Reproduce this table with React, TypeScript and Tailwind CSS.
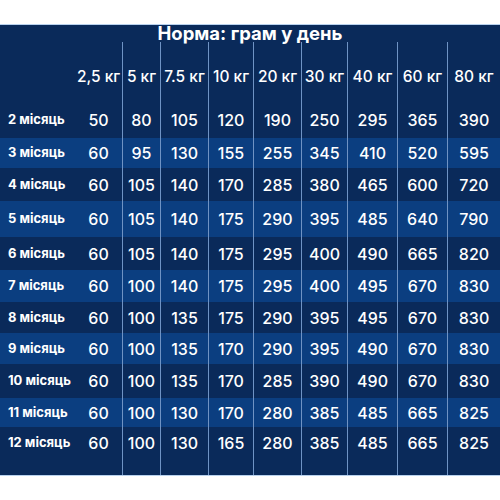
const weights = ["2,5 кг", "5 кг", "7.5 кг", "10 кг", "20 кг", "30 кг", "40 кг", "60 кг", "80 кг"];

// column widths (label column first)
const colW = ["w-[47px]", "w-[38px]", "w-[48px]", "w-[45px]", "w-[48px]", "w-[46px]", "w-[50px]", "w-[50px]", "w-[53px]"];

const rows: { label: string; h: string; values: number[] }[] = [
  { label: "2 місяць", h: "h-[36px]", values: [50, 80, 105, 120, 190, 250, 295, 365, 390] },
  { label: "3 місяць", h: "h-[30px]", values: [60, 95, 130, 155, 255, 345, 410, 520, 595] },
  { label: "4 місяць", h: "h-[33px]", values: [60, 105, 140, 170, 285, 380, 465, 600, 720] },
  { label: "5 місяць", h: "h-[36px]", values: [60, 105, 140, 175, 290, 395, 485, 640, 790] },
  { label: "6 місяць", h: "h-[33px]", values: [60, 105, 140, 175, 295, 400, 490, 665, 820] },
  { label: "7 місяць", h: "h-[32px]", values: [60, 100, 140, 175, 295, 400, 495, 670, 830] },
  { label: "8 місяць", h: "h-[31px]", values: [60, 100, 135, 175, 290, 395, 495, 670, 830] },
  { label: "9 місяць", h: "h-[31px]", values: [60, 100, 135, 170, 290, 395, 490, 670, 830] },
  { label: "10 місяць", h: "h-[34px]", values: [60, 100, 135, 170, 285, 390, 490, 670, 830] },
  { label: "11 місяць", h: "h-[29px]", values: [60, 100, 130, 170, 280, 385, 485, 665, 825] },
  { label: "12 місяць", h: "h-[32px]", values: [60, 100, 130, 165, 280, 385, 485, 665, 825] },
];

function Cell({ i, children }: { i: number; children: React.ReactNode }) {
  return (
    <div
      className={`${colW[i]} shrink-0 h-full flex items-center justify-center ${
        i > 0 ? "border-l border-[#6f93c4]" : ""
      }`}
    >
      {children}
    </div>
  );
}

export default function App() {
  return (
    <div
      className="w-[500px] h-[500px] bg-white pt-[24px] text-white"
      style={{ fontFamily: "Inter, 'Noto Sans', sans-serif" }}
    >
      <div className="bg-[#0a2a5a] border-t border-b border-[#b9d2ee]">
        <div className="h-[17px] flex items-end justify-center text-[18.5px] font-bold leading-none">
          Норма: грам у день
        </div>

        {/* header */}
        <div className="flex h-[60px] text-[15.5px] font-medium">
          <div className="w-[75px] shrink-0" />
          {weights.map((w, i) => (
            <Cell key={w} i={i}>
              <span className="mt-[10px] whitespace-nowrap">{w}</span>
            </Cell>
          ))}
        </div>

        {/* body */}
        {rows.map((r, ri) => (
          <div
            key={r.label}
            className={`flex ${r.h} ${ri % 2 === 1 ? "bg-[#0b3e80]" : ""}`}
          >
            <div className="w-[75px] shrink-0 flex items-center pl-[8px] text-[13px] font-bold whitespace-nowrap">
              {r.label}
            </div>
            {r.values.map((v, i) => (
              <Cell key={i} i={i}>
                <span className="text-[16px] font-medium">{v}</span>
              </Cell>
            ))}
          </div>
        ))}
        <div className="flex h-[16px]">
          <div className="w-[75px] shrink-0" />
          {weights.map((w, i) => (
            <Cell key={w} i={i}>
              {null}
            </Cell>
          ))}
        </div>
      </div>
    </div>
  );
}
